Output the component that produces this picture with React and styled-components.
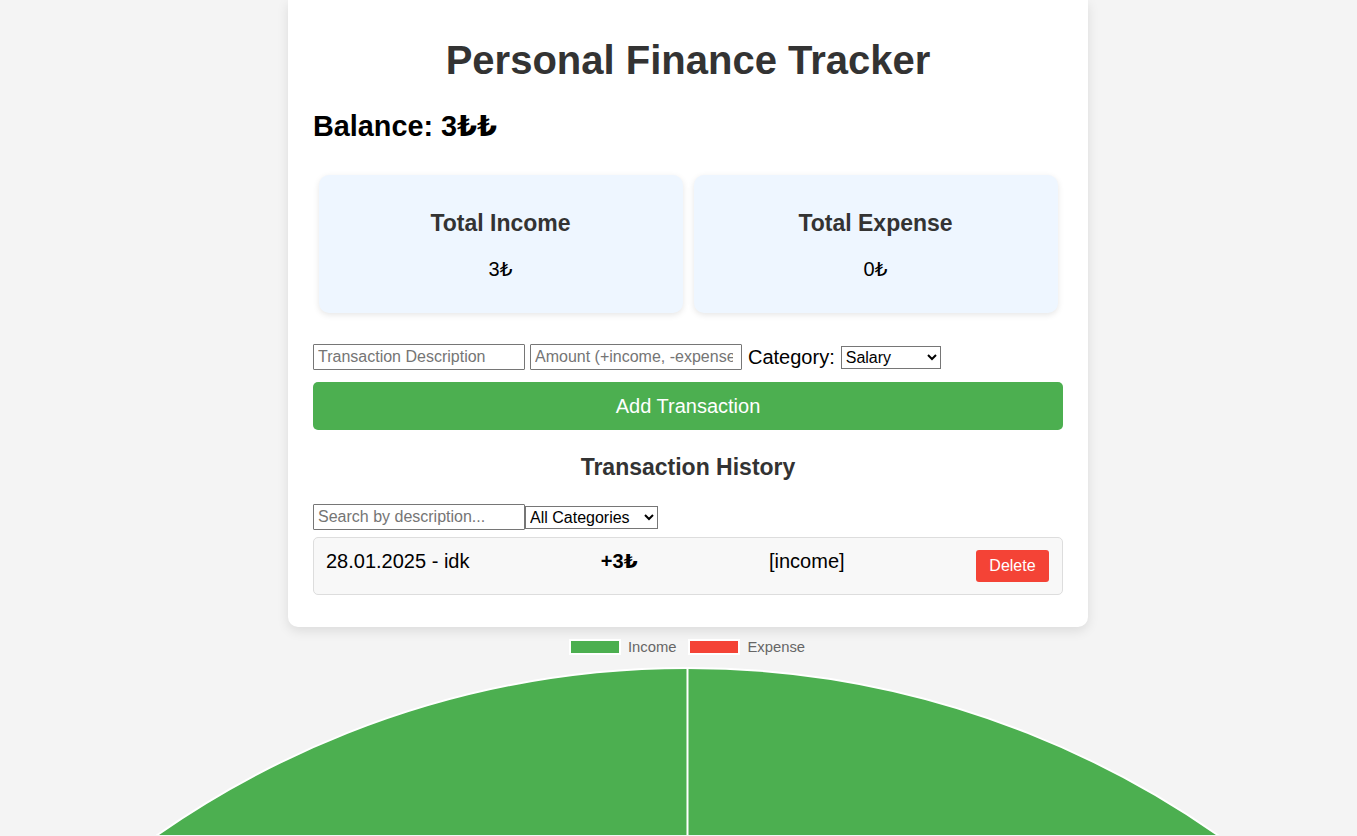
import React from "react";
import { styled, createGlobalStyle } from "styled-components";

const GlobalStyle = createGlobalStyle`
  html, body {
    margin: 0;
    padding: 0;
    overflow: hidden;
    background: #f4f4f4;
    font-family: "Liberation Sans", Arial, "DejaVu Sans", sans-serif;
  }
`;

const transactions = [
  { id: 1, date: "28.01.2025", description: "idk", amount: "+3₺", category: "income" },
];

const App = () => {
  return (
    <Page>
      <GlobalStyle />
      <Main>
        <Card>
          <Title>Personal Finance Tracker</Title>
          <Balance>Balance: 3₺₺</Balance>
          <Summary>
            <StatBox>
              <StatTitle>Total Income</StatTitle>
              <StatValue>3₺</StatValue>
            </StatBox>
            <StatBox>
              <StatTitle>Total Expense</StatTitle>
              <StatValue>0₺</StatValue>
            </StatBox>
          </Summary>

          <FormRow>
            <TextInput placeholder="Transaction Description" />
            <TextInput $padRight="8px" placeholder="Amount (+income, -expense)" />
            <Label>Category:</Label>
            <Select $width="100px" defaultValue="Salary">
              <option>Salary</option>
              <option>Food</option>
              <option>Rent</option>
            </Select>
          </FormRow>
          <AddButton>Add Transaction</AddButton>

          <SectionTitle>Transaction History</SectionTitle>
          <FilterRow>
            <TextInput placeholder="Search by description..." />
            <Select $width="133px" defaultValue="all">
              <option value="all">All Categories</option>
              <option>Salary</option>
            </Select>
          </FilterRow>
          <List>
            {transactions.map((t) => (
              <Item key={t.id}>
                <span>
                  {t.date} - {t.description}
                </span>
                <Amount>{t.amount}</Amount>
                <span>[{t.category}]</span>
                <DeleteButton>Delete</DeleteButton>
              </Item>
            ))}
          </List>
        </Card>
      </Main>

      <ChartSection>
        <Legend>
          <LegendItem>
            <LegendBox $color="#4caf50" />
            Income
          </LegendItem>
          <LegendItem>
            <LegendBox $color="#f44336" />
            Expense
          </LegendItem>
        </Legend>
        <svg width="1357" height="180" style={{ display: "block" }}>
          <circle cx="687.5" cy="937" r="924" fill="#4caf50" stroke="#fff" strokeWidth="2" />
          <line x1="687.5" y1="12" x2="687.5" y2="937" stroke="#fff" strokeWidth="2" />
        </svg>
      </ChartSection>
    </Page>
  );
};

const Page = styled.div`
  height: 100vh;
  overflow: hidden;
  background: #f4f4f4;
`;

const Main = styled.div`
  padding-left: 19px;
`;

const Card = styled.div`
  width: 800px;
  box-sizing: border-box;
  margin: 0 auto;
  padding: 38px 25px 32px;
  background: #fff;
  border-radius: 0 0 10px 10px;
  box-shadow: 0 4px 12px rgba(0, 0, 0, 0.1);
`;

const Title = styled.h1`
  margin: 0 0 26px;
  font-size: 40px;
  font-weight: 700;
  text-align: center;
  color: #333;
`;

const Balance = styled.h2`
  margin: 0 0 32px;
  font-size: 28.8px;
  font-weight: 700;
  color: #000;
`;

const Summary = styled.div`
  display: flex;
  justify-content: space-around;
`;

const StatBox = styled.div`
  width: 364px;
  height: 138px;
  box-sizing: border-box;
  padding: 35px 15px 0;
  background: #eef6ff;
  border-radius: 10px;
  box-shadow: 0 2px 6px rgba(0, 0, 0, 0.1);
  text-align: center;
`;

const StatTitle = styled.h3`
  margin: 0 0 20px;
  font-size: 23px;
  font-weight: 700;
  color: #333;
`;

const StatValue = styled.p`
  margin: 0;
  font-size: 20px;
  color: #000;
`;

const FormRow = styled.div`
  display: flex;
  align-items: center;
  gap: 5px;
  margin-top: 31px;
`;

const TextInput = styled.input`
  width: 212px;
  height: 26px;
  box-sizing: border-box;
  padding: 2px ${(p) => p.$padRight || "4px"} 2px 4px;
  border: 1px solid #767676;
  border-radius: 1px;
  font-family: inherit;
  font-size: 16px;
  color: #000;

  &::placeholder {
    color: #757575;
  }
`;

const Label = styled.span`
  margin: 0 1px;
  font-size: 20px;
  color: #000;
`;

const Select = styled.select`
  ${(p) => (p.$width ? `width: ${p.$width};` : "")}
  height: 23px;
  font-family: inherit;
  font-size: 16px;
  color: #000;
  background: #fff;
  border: 1px solid #767676;
  border-radius: 0;
`;

const AddButton = styled.button`
  display: block;
  width: 100%;
  height: 48px;
  margin-top: 12px;
  border: none;
  border-radius: 5px;
  background: #4caf50;
  color: #fff;
  font-family: inherit;
  font-size: 20px;
  cursor: pointer;
`;

const SectionTitle = styled.h3`
  margin: 24px 0 23px;
  font-size: 23px;
  font-weight: 700;
  text-align: center;
  color: #333;
`;

const FilterRow = styled.div`
  display: flex;
  align-items: center;
`;

const List = styled.div`
  margin-top: 7px;
`;

const Item = styled.div`
  display: flex;
  justify-content: space-between;
  align-items: flex-start;
  padding: 12px 13px 12px 12px;
  background: #f8f8f8;
  border: 1px solid #ddd;
  border-radius: 5px;
  font-size: 20px;
  line-height: 23px;
  color: #000;
`;

const Amount = styled.span`
  font-weight: 700;
`;

const DeleteButton = styled.button`
  width: 73px;
  height: 32px;
  border: none;
  border-radius: 3px;
  background: #f44336;
  color: #fff;
  font-family: inherit;
  font-size: 16px;
  cursor: pointer;
`;

const ChartSection = styled.div`
  margin-top: 11px;
`;

const Legend = styled.div`
  display: flex;
  justify-content: center;
  gap: 12px;
  padding-left: 17px;
  height: 17px;
`;

const LegendItem = styled.div`
  display: flex;
  align-items: center;
  gap: 7px;
  font-size: 14.8px;
  color: #666;
`;

const LegendBox = styled.span`
  width: 48px;
  height: 12px;
  border: 2px solid #fff;
  background: ${(p) => p.$color};
`;

export default App;
